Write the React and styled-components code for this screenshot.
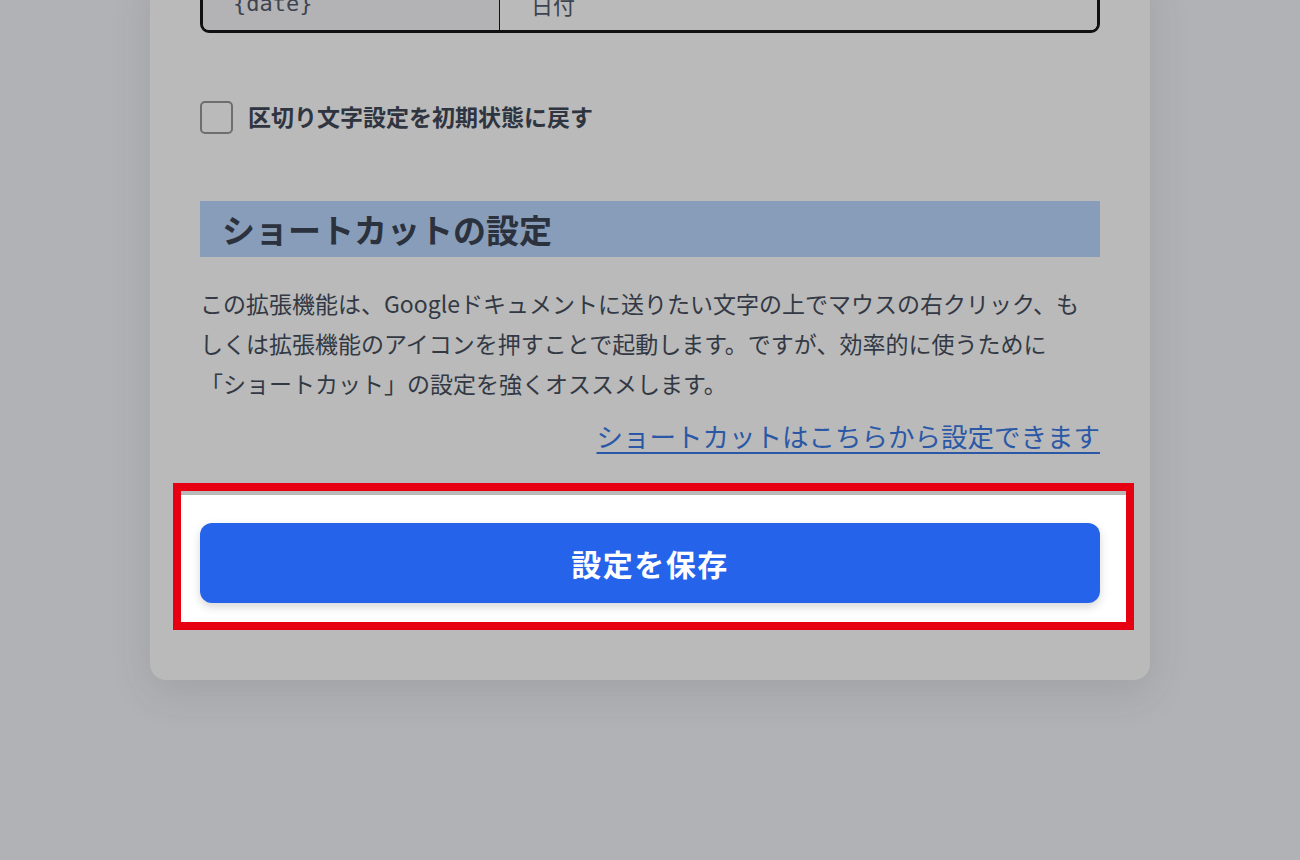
import React from "react";
import styled, { createGlobalStyle } from "styled-components";

const GlobalStyle = createGlobalStyle`
  html, body {
    margin: 0;
    padding: 0;
    height: 100%;
    background: #b1b2b5;
    overflow: hidden;
  }
  body {
    font-family: "Noto Sans CJK JP", "Noto Sans", sans-serif;
    color: #2f3540;
  }
`;

const Page = styled.div`
  width: 1300px;
  height: 860px;
  overflow: hidden;
`;

const Card = styled.div`
  width: 900px;
  margin: -30px auto 0;
  padding: 0 50px 58px;
  background: #bababa;
  border-radius: 16px;
  box-shadow: 0 12px 40px rgba(60, 62, 70, 0.14);
`;

const Table = styled.div`
  display: grid;
  grid-template-columns: 296px 1fr;
  border: 3px solid #111;
  border-radius: 9px;
  overflow: hidden;
`;

const Cell = styled.div`
  height: 57px;
  display: flex;
  align-items: center;
  padding-left: ${(p) => (p.$key ? "30px" : "31px")};
  padding-top: 4px;
  box-sizing: border-box;
  background: ${(p) => (p.$key ? "#b3b3b5" : "#bababa")};
  border-left: ${(p) => (p.$key ? "none" : "1px solid #111")};
  font-family: ${(p) =>
    p.$key ? '"DejaVu Sans Mono", "Liberation Mono", monospace' : "inherit"};
  font-size: 22px;
  color: #3d4450;
`;

const CheckRow = styled.label`
  margin-top: 68px;
  display: flex;
  align-items: center;
  height: 33px;
`;

const Box = styled.span`
  width: 29px;
  height: 29px;
  border: 2px solid #6e6e70;
  border-radius: 5px;
  box-sizing: content-box;
`;

const CheckText = styled.span`
  margin-left: 15px;
  margin-top: -4px;
  font-size: 23px;
  font-weight: 700;
  color: #2f3540;
`;

const Heading = styled.h2`
  margin: 67px 0 0;
  height: 56px;
  display: flex;
  align-items: center;
  padding-left: 22px;
  background: #889db9;
  font-size: 33px;
  font-weight: 700;
  color: #2b323d;
`;

const Para = styled.p`
  margin: 26px 0 0;
  font-size: 23px;
  line-height: 40px;
  color: #323944;
  white-space: nowrap;
`;

const LinkRow = styled.div`
  margin-top: 16px;
  text-align: right;
  line-height: 34px;
`;

const Link = styled.a`
  font-size: 26.5px;
  color: #2b58a6;
  text-decoration: underline;
  text-underline-offset: 5px;
  text-decoration-thickness: 2px;
`;

const Footer = styled.div`
  margin: 34px -26px 0 -19px;
  padding: 28px 26px 19px 19px;
  background: #fff;
  border-top: 4px solid #b9b9b9;
  outline: 8px solid #e60012;
`;

const SaveButton = styled.button`
  width: 100%;
  height: 80px;
  border: none;
  border-radius: 12px;
  background: #2563eb;
  color: #fff;
  font-family: inherit;
  font-size: 30px;
  font-weight: 700;
  letter-spacing: 1.5px;
  box-shadow: 0 4px 10px rgba(0, 0, 0, 0.16);
  cursor: pointer;
`;

export default function App() {
  return (
    <Page>
      <GlobalStyle />
      <Card>
        <Table>
          <Cell $key>{"{date}"}</Cell>
          <Cell>日付</Cell>
        </Table>

        <CheckRow>
          <Box />
          <CheckText>区切り文字設定を初期状態に戻す</CheckText>
        </CheckRow>

        <Heading>ショートカットの設定</Heading>
        <Para>
          この拡張機能は、Googleドキュメントに送りたい文字の上でマウスの右クリック、も
          <br />
          しくは拡張機能のアイコンを押すことで起動します。ですが、効率的に使うために
          <br />
          「ショートカット」の設定を強くオススメします。
        </Para>
        <LinkRow>
          <Link>ショートカットはこちらから設定できます</Link>
        </LinkRow>

        <Footer>
          <SaveButton>設定を保存</SaveButton>
        </Footer>
      </Card>
    </Page>
  );
}
